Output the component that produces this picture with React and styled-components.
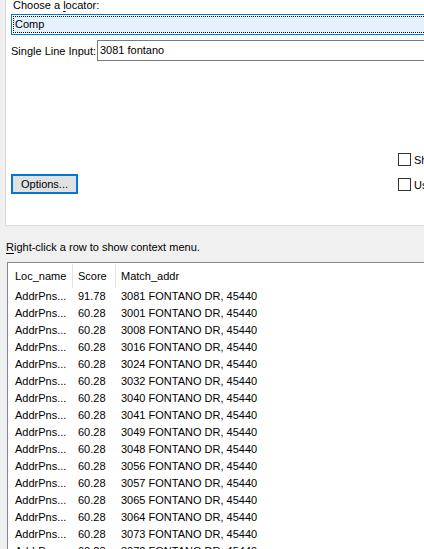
import React from "react";
import styled, { createGlobalStyle } from "styled-components";

const Global = createGlobalStyle`
  html, body { margin: 0; padding: 0; overflow: hidden; }
  body {
    background: #f0f0f0;
    font-family: "Liberation Sans", Arial, sans-serif;
    font-size: 11px;
    color: #000;
  }
`;

const Window = styled.div`
  width: 560px;
  height: 549px;
  overflow: hidden;
`;

const Panel = styled.div`
  margin-left: 5px;
  height: 226px;
  box-sizing: border-box;
  background: #fff;
  border-left: 1px solid #dadada;
  border-bottom: 1px solid #dadada;
  padding: 0 0 0 5px;
  display: flex;
  flex-direction: column;
`;

const Caption = styled.div`
  margin: -2px 0 0 2px;
  line-height: 14px;
  height: 14px;
`;

const Combo = styled.div`
  margin-top: 2px;
  height: 21px;
  box-sizing: border-box;
  border: 1px solid #0078d7;
  padding: 1px;
  background: #fff;
`;

const ComboFocus = styled.div`
  height: 100%;
  box-sizing: border-box;
  border: 1px dotted #000;
  background: #e5f1fb;
  padding-left: 1px;
  line-height: 15px;
`;

const InputRow = styled.div`
  margin-top: 5px;
  display: flex;
  align-items: center;
  gap: 4px;
`;

const InputLabel = styled.span`
  width: 82px;
  white-space: nowrap;
`;

const TextBox = styled.div`
  flex: 1;
  height: 21px;
  box-sizing: border-box;
  border: 1px solid #7a7a7a;
  padding-left: 2px;
  line-height: 18px;
`;

const Lower = styled.div`
  display: grid;
  grid-template-columns: 387px 1fr;
  margin-top: 92px;
`;

const ButtonCell = styled.div`
  padding-top: 21px;
`;

const Button = styled.button`
  width: 67px;
  height: 20px;
  box-sizing: border-box;
  border: 2px solid #0078d7;
  background: #e1e1e1;
  font: inherit;
  color: #000;
  padding: 0;
  line-height: 14px;
`;

const CheckColumn = styled.div`
  display: flex;
  flex-direction: column;
  gap: 12px;
`;

const CheckRow = styled.label`
  display: flex;
  align-items: center;
  gap: 3px;
  white-space: nowrap;
`;

const Box = styled.span`
  width: 13px;
  height: 13px;
  box-sizing: border-box;
  border: 1px solid #333;
  background: #fff;
`;

const Hint = styled.div`
  padding: 14px 0 0 6px;
  line-height: 15px;
  height: 22px;
`;

const Access = styled.span`
  text-decoration: underline;
  text-underline-offset: 2px;
`;

const Grid = styled.div`
  margin-left: 7px;
  border: 1px solid #828790;
  border-right: none;
  border-bottom: none;
  background: #fff;
  height: 400px;
`;

const cols = "65px 43px 1fr";

const HeaderRow = styled.div`
  display: grid;
  grid-template-columns: ${cols};
  height: 25px;
  padding-top: 1px;
  box-sizing: border-box;
`;

const HeadCell = styled.div`
  line-height: 24px;
  padding-left: ${(p) => p.$pad}px;
  border-right: ${(p) => (p.$last ? "none" : "1px solid #e5e5e5")};
`;

const Row = styled.div`
  display: grid;
  grid-template-columns: ${cols};
  height: 17px;
  line-height: 17px;
`;

const Cell = styled.div`
  padding-left: ${(p) => p.$pad}px;
  white-space: nowrap;
  overflow: hidden;
`;

const rows = [
  ["91.78", "3081"],
  ["60.28", "3001"],
  ["60.28", "3008"],
  ["60.28", "3016"],
  ["60.28", "3024"],
  ["60.28", "3032"],
  ["60.28", "3040"],
  ["60.28", "3041"],
  ["60.28", "3049"],
  ["60.28", "3048"],
  ["60.28", "3056"],
  ["60.28", "3057"],
  ["60.28", "3065"],
  ["60.28", "3064"],
  ["60.28", "3073"],
  ["60.28", "3072"],
];

export default function App() {
  return (
    <Window>
      <Global />
      <Panel>
        <Caption>
          Choose a <Access>l</Access>ocator:
        </Caption>
        <Combo>
          <ComboFocus>Comp</ComboFocus>
        </Combo>
        <InputRow>
          <InputLabel>Single Line Input:</InputLabel>
          <TextBox>3081 fontano</TextBox>
        </InputRow>
        <Lower>
          <ButtonCell>
            <Button>Options...</Button>
          </ButtonCell>
          <CheckColumn>
            <CheckRow>
              <Box />
              Show candidates
            </CheckRow>
            <CheckRow>
              <Box />
              Use map extent
            </CheckRow>
          </CheckColumn>
        </Lower>
      </Panel>
      <Hint>
        <Access>R</Access>ight-click a row to show context menu.
      </Hint>
      <Grid>
        <HeaderRow>
          <HeadCell $pad={7}>Loc_name</HeadCell>
          <HeadCell $pad={5}>Score</HeadCell>
          <HeadCell $pad={5} $last>
            Match_addr
          </HeadCell>
        </HeaderRow>
        {rows.map(([score, num], i) => (
          <Row key={i}>
            <Cell $pad={7}>AddrPns...</Cell>
            <Cell $pad={5}>{score}</Cell>
            <Cell $pad={5}>{num} FONTANO DR, 45440</Cell>
          </Row>
        ))}
      </Grid>
    </Window>
  );
}
